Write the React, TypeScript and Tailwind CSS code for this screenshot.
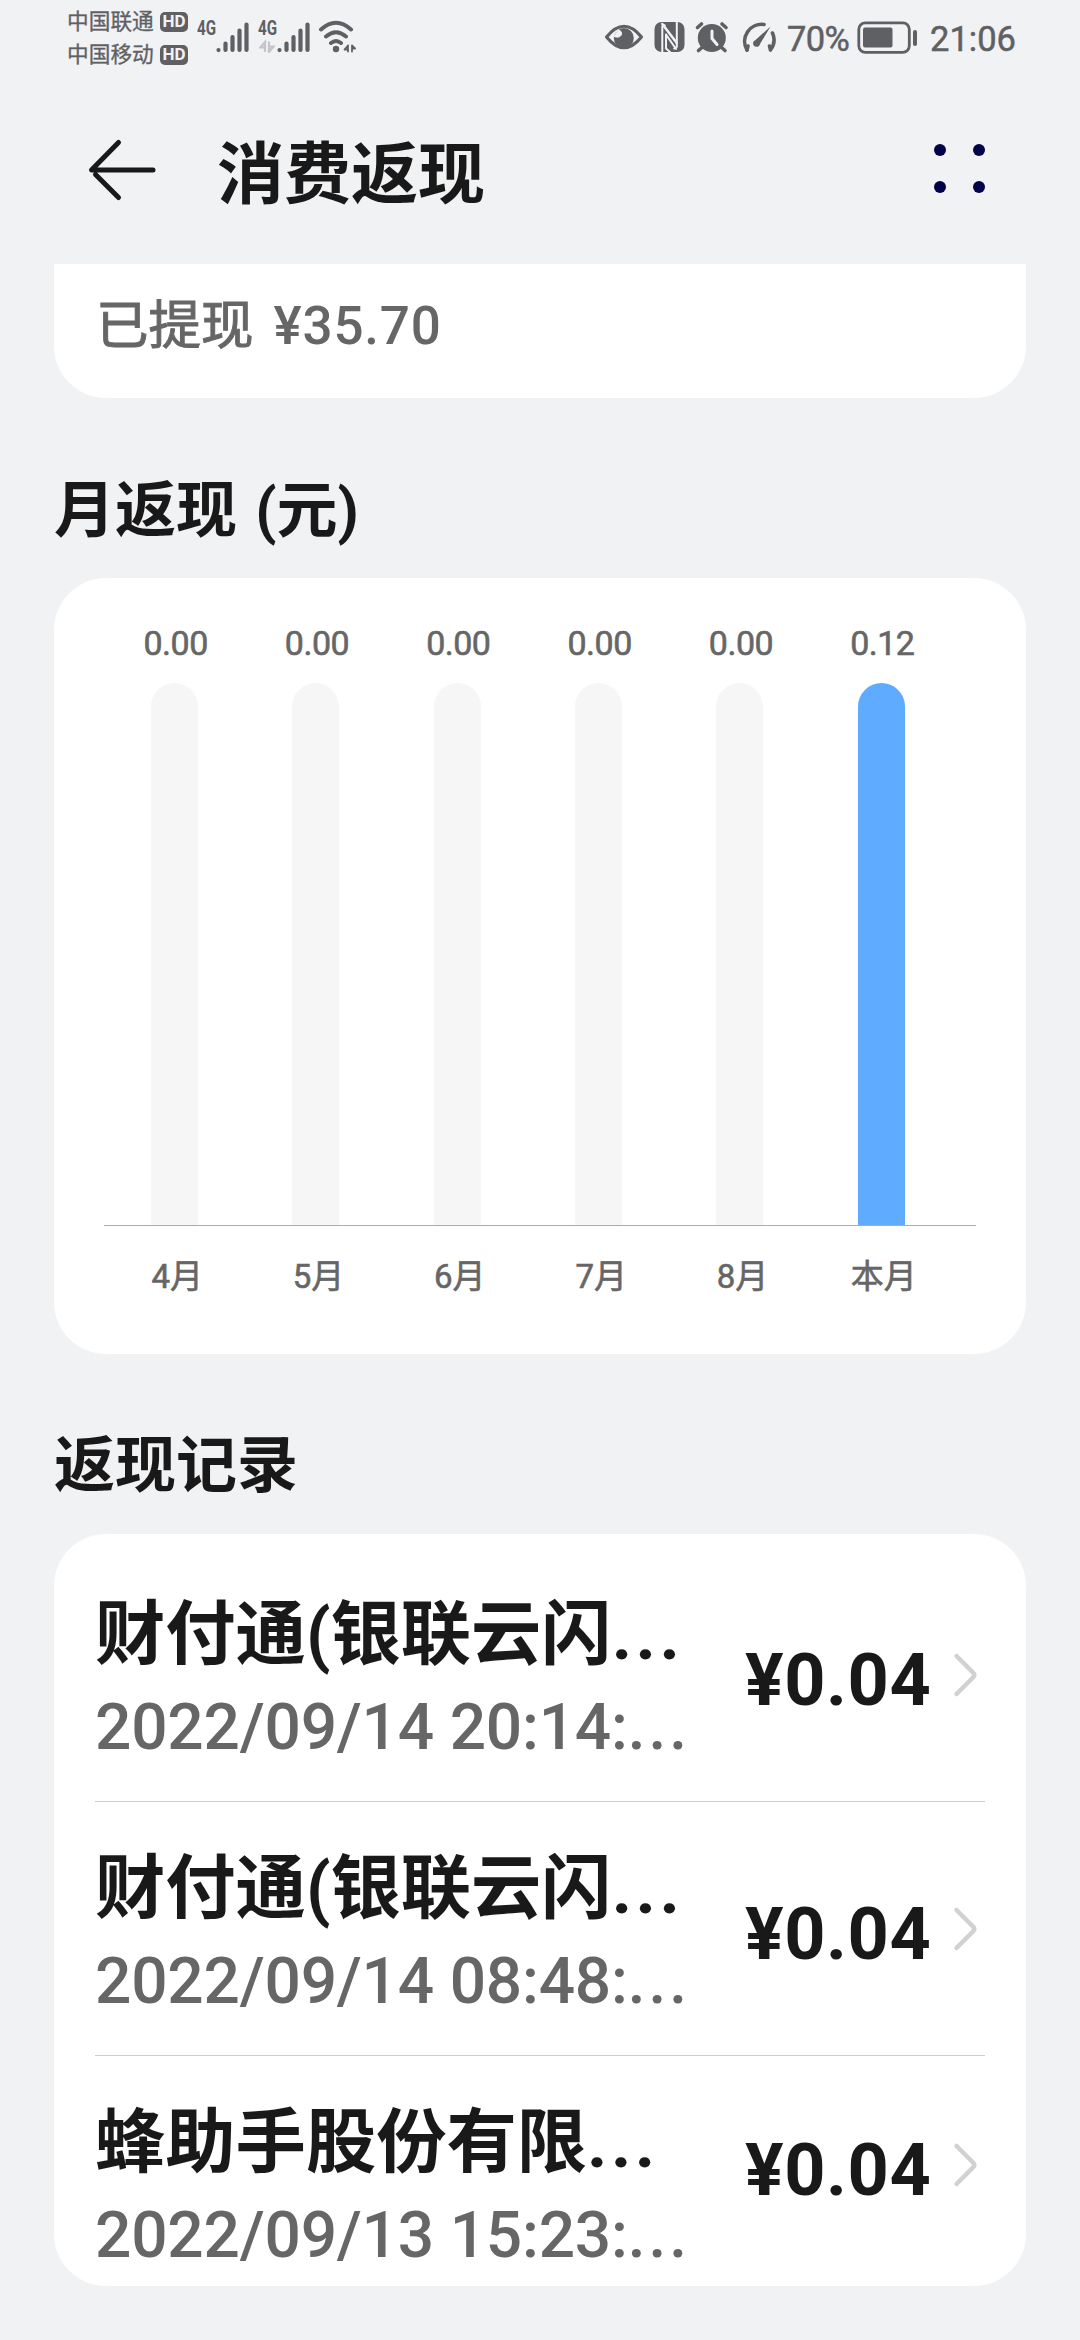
import type { ReactNode } from "react";

const months = [
  { label: "4月", value: "0.00", active: false },
  { label: "5月", value: "0.00", active: false },
  { label: "6月", value: "0.00", active: false },
  { label: "7月", value: "0.00", active: false },
  { label: "8月", value: "0.00", active: false },
  { label: "本月", value: "0.12", active: true },
];

const records = [
  { title: "财付通(银联云闪", time: "2022/09/14 20:14:", amount: "¥0.04" },
  { title: "财付通(银联云闪", time: "2022/09/14 08:48:", amount: "¥0.04" },
  { title: "蜂助手股份有限", time: "2022/09/13 15:23:", amount: "¥0.04" },
];

function Carrier({ name }: { name: string }) {
  return (
    <div className="flex h-[33px] items-center">
      <span className="w-[93px] text-[21.7px] leading-[24px] [-webkit-text-stroke:0.3px]">{name}</span>
      <span className="flex h-[20px] w-[28px] items-center justify-center rounded-[5px] bg-[#5f6063] text-[17px] font-bold leading-none text-[#f1f2f4]">
        HD
      </span>
    </div>
  );
}

function Signal({ data }: { data?: boolean }) {
  return (
    <div className="relative h-[32px] w-[51px]">
      <span className="absolute -left-px -top-px origin-left scale-x-[0.78] text-[19.5px] font-bold leading-[18px]">
        4G
      </span>
      <svg className="absolute inset-0" width="51" height="32" viewBox="0 0 51 32">
        <g stroke="#5f6063" strokeWidth="4.2" strokeLinecap="round">
          <path d="M20.5 29v.1M27.5 22.5V29M34.5 16V29M41.5 9.500V29M48.500 3.500V29" />
        </g>
        {data && (
          <path d="M6 31V21L1.500 26.500H6M10 20.500V31L14.500 25.500H10" fill="none" stroke="#c4c5c8" strokeWidth="2.2" />
        )}
      </svg>
    </div>
  );
}

function Icon({ box, w, h, children, className = "" }: { box: string; w: number; h: number; children: ReactNode; className?: string }) {
  return (
    <svg className={`shrink-0 ${className}`} viewBox={box} width={w} height={h} fill="none" stroke="#5f6063" strokeLinecap="round" strokeLinejoin="round">
      {children}
    </svg>
  );
}

function StatusBar() {
  return (
    <div className="flex h-[80px] items-start pl-[67px] text-[#5f6063]">
      <div className="pt-[5px]">
        <Carrier name="中国联通" />
        <Carrier name="中国移动" />
      </div>
      <div className="ml-[10px] flex gap-[10px] pt-[21px]">
        <Signal />
        <Signal data />
      </div>
      <Icon box="0 0 40 34" w={40} h={34} className="ml-[8px] mt-[20px]">
        <path d="M3 9.500Q18 -4 33 9.500M8 16.500Q18 8 28 16.500M13 23Q18 19 23 23" strokeWidth="4" />
        <circle cx="18" cy="29" r="3.200" fill="#5f6063" stroke="none" />
        <path d="M30 25.500V31.500M30 25.500L26.500 29.500H30M34 25.500V31.500M34 31.500V25.500L37 28.500H34" strokeWidth="1.800" />
      </Icon>
      <div className="ml-[246px] flex items-start">
        <Icon box="605 20 40 34" w={40} h={34} className="mt-[20px]">
          <path d="M607.500 37Q625 15.500 642.500 37Q625 58.500 607.500 37Z" strokeWidth="3.200" />
          <circle cx="624.800" cy="38" r="10" fill="#5f6063" stroke="none" />
          <path d="M615 36.500C619 38 623 37 622.500 32.500C622 31 620.500 30 619 30Z" fill="#f1f2f4" stroke="#f1f2f4" strokeWidth="1" />
        </Icon>
        <Icon box="655 22 31 30" w={31} h={30} className="ml-[10px] mt-[22px]">
          <rect x="655.500" y="22" width="30" height="30" rx="7" fill="#5f6063" stroke="none" />
          <path d="M663.300 52V26.500L666.500 25" stroke="#f1f2f4" strokeWidth="2" strokeLinecap="butt" />
          <path d="M677.800 22V47L674.500 49" stroke="#f1f2f4" strokeWidth="2" strokeLinecap="butt" />
          <path d="M663.300 24L677.800 43" stroke="#f1f2f4" strokeWidth="2.500" />
          <path d="M667 34.500V48.500L671 52M667 34.500L677 49" stroke="#f1f2f4" strokeWidth="2" />
        </Icon>
        <Icon box="695 21 35 33" w={35} h={33} className="ml-[9px] mt-[21px]">
          <circle cx="712.800" cy="38" r="14" fill="#5f6063" stroke="none" />
          <path d="M698.500 27.500l4-3.500M723 24l4 3.500M703 47.500l-3.500 3M722.500 47.500l3.500 3" strokeWidth="3.600" />
          <path d="M713 31v7.500l5 6" stroke="#f1f2f4" strokeWidth="3" />
        </Icon>
        <Icon box="740 20 38 34" w={38} h={34} className="ml-[10px] mt-[20px]">
          <path d="M765 24.500A17 17 0 0 0 748 50" strokeWidth="3.600" />
          <path d="M748 50l1-4M771.500 50l-1-4M773.500 33a17 17 0 0 1-2 17" strokeWidth="3.600" />
          <path d="M771.500 26.500L756.500 40a3.500 3.500 0 1 0 4.500 4Z" fill="#5f6063" stroke="none" />
        </Icon>
        <span className="ml-[10px] mt-[22px] w-[72px] whitespace-nowrap text-[34.5px] leading-[34px] tracking-[-0.6px] [-webkit-text-stroke:0.5px]">70%</span>
        <Icon box="857 21 62 33" w={62} h={33} className="-ml-[2px] mt-[21px]">
          <rect x="858.800" y="22.800" width="50.500" height="29.500" rx="6.500" strokeWidth="2.800" />
          <rect x="863" y="27.500" width="29.500" height="20" rx="2" fill="#5f6063" stroke="none" />
          <path d="M915 32v12" strokeWidth="4" />
        </Icon>
        <span className="ml-[11px] mt-[22px] whitespace-nowrap text-[34.5px] leading-[34px] [-webkit-text-stroke:0.5px]">21:06</span>
      </div>
    </div>
  );
}

export default function App() {
  return (
    <div className="flex h-[2340px] w-[1080px] flex-col overflow-hidden bg-[#f1f2f4] font-[Roboto,'Noto_Sans_CJK_SC',sans-serif] text-[#191919]">
      <StatusBar />
      <header className="flex h-[184px] items-center pl-[87px] pr-[95px]">
        <svg className="mb-[5px]" width="70" height="64" viewBox="0 0 70 64" fill="none" stroke="#191919" strokeWidth="5" strokeLinecap="round" strokeLinejoin="round">
          <path d="M31.500 4.500L4.500 32H66M8.500 36.500L31.500 59.500" />
        </svg>
        <h1 className="ml-[60px] mt-[5px] text-[67px] font-bold leading-[70px]">消费返现</h1>
        <div className="mb-[7px] ml-auto grid grid-cols-2 gap-x-[27px] gap-y-[25px]">
          {[0, 1, 2, 3].map((i) => (
            <i key={i} className="h-[12px] w-[12px] rounded-full bg-[#02024a]" />
          ))}
        </div>
      </header>

      <main className="flex flex-col px-[54px]">
        <section className="h-[134px] rounded-b-[52px] bg-white pl-[42px] pt-[36px] text-[52px] leading-[52px] text-[#666666]">
          <span className="text-[52.5px] [-webkit-text-stroke:1px]">已提现</span>
          <span className="ml-[20px] text-[53px] font-medium tracking-[0.8px]">¥35.70</span>
        </section>

        <h2 className="mb-[37px] mt-[83px] text-[61px] font-bold leading-[60px] [word-spacing:3px]">月返现 (元)</h2>
        <section className="h-[776px] rounded-[52px] bg-white px-[50px] pt-[48px] text-[#666666]">
          <div className="border-b border-[#8fb4cf]">
            <div className="grid w-[848px] grid-cols-6">
              {months.map((m) => (
                <div key={m.label} className="flex flex-col items-center">
                  <span className="ml-[2px] text-[34px] leading-[34px] tracking-[-0.5px] [-webkit-text-stroke:0.6px]">{m.value}</span>
                  <div className={`mt-[23px] h-[542px] w-[47px] rounded-t-full ${m.active ? "bg-[#5eabff]" : "bg-[#f6f6f6]"}`} />
                </div>
              ))}
            </div>
          </div>
          <div className="mt-[34px] grid w-[848px] grid-cols-6">
            {months.map((m) => (
              <span key={m.label} className="ml-[5px] text-center text-[33px] leading-[34px] [-webkit-text-stroke:0.6px]">
                {m.label}
              </span>
            ))}
          </div>
        </section>

        <h2 className="mb-[37px] mt-[82px] text-[61px] font-bold leading-[61px]">返现记录</h2>
        <section className="h-[752px] rounded-[52px] bg-white pl-[41px] pr-[41px] pt-[14px]">
          {records.map((r, i) => (
            <div
              key={r.time}
              className={`flex items-center ${i < 2 ? "h-[254px] border-b border-[#cccccc]" : "h-[218px]"}`}
            >
              <div className="w-[650px] shrink-0 self-start whitespace-nowrap pt-[52px]">
                <div className="text-[70.3px] font-bold leading-[70px]">
                  {r.title}
                  <span className="tracking-[3.5px]">...</span>
                </div>
                <div className="mt-[26px] text-[64px] font-medium leading-[64px] tracking-[-0.2px] text-[#666666]">
                  {r.time}
                  <span className="tracking-[3px]">...</span>
                </div>
              </div>
              <span className="mt-[11px] w-[186px] whitespace-nowrap text-[72px] font-bold leading-[71px] tracking-[0.6px]">{r.amount}</span>
              <svg className="ml-[22px] shrink-0" width="26" height="46" viewBox="0 0 26 46" fill="none" stroke="#d1d1d1" strokeWidth="4.500" strokeLinecap="round" strokeLinejoin="round">
                <path d="M3.500 4L20 20.500Q22.500 23 20 25.500L3.500 42" />
              </svg>
            </div>
          ))}
        </section>
      </main>
    </div>
  );
}
